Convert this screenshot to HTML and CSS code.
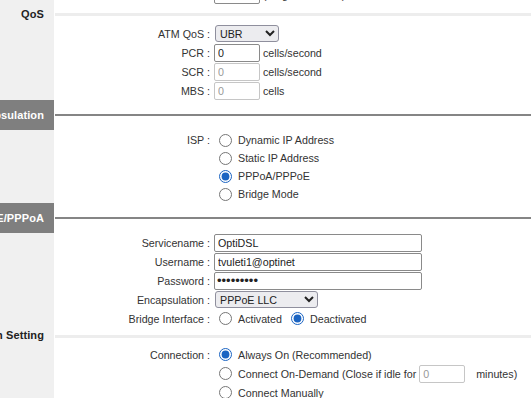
FILE: index.html
```html
<!DOCTYPE html>
<html lang="en">
<head>
    <meta charset="UTF-8">
    <meta name="viewport" content="width=device-width, initial-scale=1.0">
    <title>WAN Settings</title>
    <link rel="stylesheet" href="styles.css">
</head>
<body>
    <div class="page">
        <div class="row">
            <div class="side"></div>
            <div class="label">VCI :</div>
            <div class="value"><input type="text" class="text short" value="33"><span class="unit">(range: 1~65535)</span></div>
        </div>

        <!-- QoS -->
        <div class="head">
            <div class="side">QoS</div>
            <div class="rule"></div>
        </div>
        <div class="row">
            <div class="side"></div>
            <div class="label">ATM QoS :</div>
            <div class="value">
                <select class="sel qos">
                    <option>UBR</option>
                    <option>CBR</option>
                    <option>rt-VBR</option>
                    <option>nrt-VBR</option>
                </select>
            </div>
        </div>
        <div class="row">
            <div class="side"></div>
            <div class="label">PCR :</div>
            <div class="value"><input type="text" class="text short" value="0"><span class="unit">cells/second</span></div>
        </div>
        <div class="row">
            <div class="side"></div>
            <div class="label">SCR :</div>
            <div class="value"><input type="text" class="text short" value="0" disabled><span class="unit">cells/second</span></div>
        </div>
        <div class="row">
            <div class="side"></div>
            <div class="label">MBS :</div>
            <div class="value"><input type="text" class="text short" value="0" disabled><span class="unit">cells</span></div>
        </div>

        <!-- Encapsulation -->
        <div class="head dark">
            <div class="side">Encapsulation</div>
            <div class="rule"></div>
        </div>
        <div class="group">
            <div class="row radio-row">
                <div class="side"></div>
                <div class="label">ISP :</div>
                <div class="value"><input type="radio" name="isp"><span class="opt">Dynamic IP Address</span></div>
            </div>
            <div class="row radio-row">
                <div class="side"></div>
                <div class="label"></div>
                <div class="value"><input type="radio" name="isp"><span class="opt">Static IP Address</span></div>
            </div>
            <div class="row radio-row">
                <div class="side"></div>
                <div class="label"></div>
                <div class="value"><input type="radio" name="isp" checked><span class="opt">PPPoA/PPPoE</span></div>
            </div>
            <div class="row radio-row">
                <div class="side"></div>
                <div class="label"></div>
                <div class="value"><input type="radio" name="isp"><span class="opt">Bridge Mode</span></div>
            </div>
        </div>

        <!-- PPPoE/PPPoA -->
        <div class="head dark">
            <div class="side">PPPoE/PPPoA</div>
            <div class="rule"></div>
        </div>
        <div class="row">
            <div class="side"></div>
            <div class="label">Servicename :</div>
            <div class="value"><input type="text" class="text long" value="OptiDSL"></div>
        </div>
        <div class="row">
            <div class="side"></div>
            <div class="label">Username :</div>
            <div class="value"><input type="text" class="text long" value="tvuleti1@optinet"></div>
        </div>
        <div class="row">
            <div class="side"></div>
            <div class="label">Password :</div>
            <div class="value"><input type="password" class="text long secret" value="123456789"></div>
        </div>
        <div class="row">
            <div class="side"></div>
            <div class="label">Encapsulation :</div>
            <div class="value">
                <select class="sel encap">
                    <option>PPPoE LLC</option>
                    <option>PPPoE VC-Mux</option>
                    <option>PPPoA LLC</option>
                    <option>PPPoA VC-Mux</option>
                </select>
            </div>
        </div>
        <div class="row">
            <div class="side"></div>
            <div class="label">Bridge Interface :</div>
            <div class="value">
                <input type="radio" name="bridge"><span class="opt gap">Activated</span>
                <input type="radio" name="bridge" checked><span class="opt">Deactivated</span>
            </div>
        </div>

        <!-- Connection Setting -->
        <div class="head small">
            <div class="side">Connection Setting</div>
            <div class="rule"></div>
        </div>
        <div class="row">
            <div class="side"></div>
            <div class="label">Connection :</div>
            <div class="value"><input type="radio" name="conn" checked><span class="opt">Always On (Recommended)</span></div>
        </div>
        <div class="row">
            <div class="side"></div>
            <div class="label"></div>
            <div class="value">
                <input type="radio" name="conn"><span class="opt">Connect On-Demand (Close if idle for</span>
                <input type="text" class="text idle" value="0" disabled><span class="unit wide">minutes)</span>
            </div>
        </div>
        <div class="row">
            <div class="side"></div>
            <div class="label"></div>
            <div class="value"><input type="radio" name="conn"><span class="opt">Connect Manually</span></div>
        </div>
    </div>
</body>
</html>
```

FILE: styles.css
```css
body {
    margin: 0;
    font-family: "Liberation Sans", Arial, sans-serif;
    font-size: 10.7px;
    color: #333;
    background: #fff;
    overflow: hidden;
}

.page {
    margin-top: -15px;
}

.row {
    display: flex;
    align-items: center;
    height: 19px;
}

.radio-row {
    height: 18px;
}

.group {
    padding-top: 1px;
    background: linear-gradient(to right, #f0f0f0 54px, #fff 54px);
}

.side {
    width: 54px;
    flex: none;
    align-self: stretch;
    box-sizing: border-box;
    padding-right: 10px;
    background: #f0f0f0;
    display: flex;
    justify-content: flex-end;
    align-items: center;
    overflow: hidden;
    white-space: nowrap;
    font-size: 11px;
    font-weight: bold;
    letter-spacing: 0.1px;
    color: #222;
}

.label {
    width: 160px;
    flex: none;
    box-sizing: border-box;
    padding-right: 4px;
    text-align: right;
    white-space: nowrap;
}

.value {
    display: flex;
    align-items: center;
    white-space: nowrap;
}

/* section headers */
.head {
    display: flex;
    height: 20px;
}

.head .rule {
    flex: 1;
    align-self: center;
    height: 3px;
    margin-left: 1px;
    background: #ededed;
}

.head.dark {
    height: 30px;
}

.head.small {
    height: 17px;
}

.head.small .side {
    padding-bottom: 3px;
}

.head.dark .side {
    background: #7f7f7f;
    color: #fff;
}

.head.dark .rule {
    height: 2px;
    background: #858585;
}

/* controls */
.text {
    height: 18px;
    box-sizing: border-box;
    padding: 1px 3px;
    border: 1px solid #8a8a8a;
    border-radius: 2px;
    font: inherit;
    color: #222;
    background: #fff;
}

.text:disabled {
    border-color: #c6c6c6;
    color: #999;
}

.secret {
    font-size: 13px;
    padding-left: 2px;
}

.short {
    width: 46px;
}

.long {
    width: 208px;
}

.idle {
    width: 46px;
    margin-left: 3px;
}

.unit {
    margin-left: 3px;
}

.unit.wide {
    margin-left: 11px;
}

.sel {
    height: 17px;
    font: inherit;
    color: #222;
    background-color: #ececef;
    border: 1px solid #8f8f9d;
    border-radius: 3px;
    margin-left: 1px;
}

.qos {
    width: 64px;
}

.encap {
    width: 103px;
}

input[type="radio"] {
    width: 13px;
    height: 13px;
    margin: 0 6px 0 5px;
    flex: none;
    accent-color: #1b64c2;
}

.opt.gap {
    margin-right: 4px;
}
```
